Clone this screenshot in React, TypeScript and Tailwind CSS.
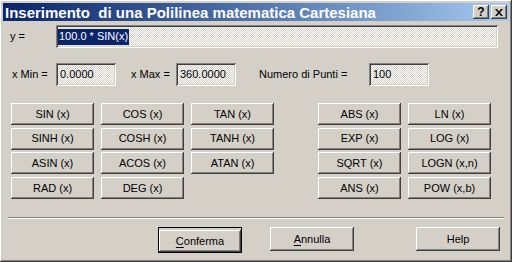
import React from "react";

const FONT = "font-['Liberation_Sans',Arial,sans-serif]";

const RAISED =
  "shadow-[inset_-1px_-1px_#404040,inset_1px_1px_#ffffff,inset_-2px_-2px_#808080,inset_2px_2px_#d4d0c8]";
const SUNKEN =
  "shadow-[inset_1px_1px_#808080,inset_-1px_-1px_#ffffff,inset_2px_2px_#404040,inset_-2px_-2px_#d4d0c8]";
const DITHER =
  "bg-[repeating-conic-gradient(#ffffff_0%_25%,#d4d0c8_0%_50%)] bg-[length:2px_2px]";

const LEFT_FUNCS = [
  ["SIN (x)", "COS (x)", "TAN (x)"],
  ["SINH (x)", "COSH (x)", "TANH (x)"],
  ["ASIN (x)", "ACOS (x)", "ATAN (x)"],
  ["RAD (x)", "DEG (x)", ""],
];

const RIGHT_FUNCS = [
  ["ABS (x)", "LN (x)"],
  ["EXP (x)", "LOG (x)"],
  ["SQRT (x)", "LOGN (x,n)"],
  ["ANS (x)", "POW (x,b)"],
];

const FuncButton: React.FC<{ label: string }> = ({ label }) =>
  label ? (
    <button
      className={`w-[83px] h-[22px] bg-[#d4d0c8] text-[11px] text-black ${RAISED}`}
    >
      {label}
    </button>
  ) : (
    <div className="w-[83px] h-[22px]" />
  );

const Field: React.FC<{ value: string; className?: string }> = ({
  value,
  className = "",
}) => (
  <div
    className={`h-[23px] flex items-center pl-[4px] text-[11px] text-black ${DITHER} ${SUNKEN} ${className}`}
  >
    {value}
  </div>
);

export default function App() {
  return (
    <div
      className={`w-[512px] h-[262px] p-[3px] bg-[#d4d0c8] flex flex-col ${FONT} ${RAISED}`}
    >
      {/* Title bar */}
      <div className="h-[18px] flex items-center bg-gradient-to-r from-[#0a246a] to-[#a6caf0] pl-[2px] pr-[2px]">
        <span className="text-white font-bold text-[15px] leading-none whitespace-pre">
          Inserimento  di una Polilinea matematica Cartesiana
        </span>
        <div className="ml-auto flex items-center gap-[2px]">
          <div
            className={`w-[16px] h-[14px] bg-[#d4d0c8] flex items-center justify-center text-[12px] font-bold leading-none ${RAISED}`}
          >
            ?
          </div>
          <div
            className={`w-[16px] h-[14px] bg-[#d4d0c8] flex items-center justify-center ${RAISED}`}
          >
            <svg width="8" height="7" viewBox="0 0 8 7">
              <path
                d="M0 0h2l2 2.5L6 0h2L5 3.5 8 7H6L4 4.5 2 7H0l3-3.5z"
                fill="#000"
              />
            </svg>
          </div>
        </div>
      </div>

      {/* Client area */}
      <div className="flex-1 flex flex-col">
        {/* y = */}
        <div className="mt-[4px] flex items-center h-[23px]">
          <span className="w-[53px] pl-[7px] text-[11px]">y =</span>
          <div
            className={`w-[442px] h-[23px] flex items-center pl-[2px] text-[11px] ${DITHER} ${SUNKEN}`}
          >
            <span className="bg-[#0a246a] text-white h-[16px] flex items-center px-[1px]">
              100.0 * SIN(x)
            </span>
          </div>
        </div>

        {/* Range */}
        <div className="mt-[15px] flex items-center h-[23px] text-[11px]">
          <span className="w-[53px] pl-[9px]">x Min =</span>
          <Field value="0.0000" className="w-[60px]" />
          <span className="w-[60px] pl-[15px]">x Max =</span>
          <Field value="360.0000" className="w-[60px]" />
          <span className="w-[133px] pl-[23px]">Numero di Punti =</span>
          <Field value="100" className="w-[60px]" />
        </div>

        {/* Function buttons */}
        <div className="mt-[17px] flex pl-[8px]">
          <div className="flex flex-col gap-[2.7px]">
            {LEFT_FUNCS.map((row, i) => (
              <div key={i} className="flex gap-[7px]">
                {row.map((f, j) => (
                  <FuncButton key={j} label={f} />
                ))}
              </div>
            ))}
          </div>
          <div className="ml-[44px] flex flex-col gap-[2.7px]">
            {RIGHT_FUNCS.map((row, i) => (
              <div key={i} className="flex gap-[7px]">
                {row.map((f, j) => (
                  <FuncButton key={j} label={f} />
                ))}
              </div>
            ))}
          </div>
        </div>

        {/* Separator */}
        <div className="mt-[18px] mx-[5px] h-[2px] border-t border-[#808080] border-b border-b-white" />

        {/* Bottom buttons */}
        <div className="mt-[8px] flex pl-[155px]">
          <div className="border border-black">
            <button
              className={`w-[82px] h-[22px] bg-[#d4d0c8] text-[11px] ${RAISED}`}
            >
              <span className="underline underline-offset-2">C</span>onferma
            </button>
          </div>
          <button
            className={`ml-[28px] w-[84px] h-[24px] bg-[#d4d0c8] text-[11px] ${RAISED}`}
          >
            <span className="underline underline-offset-2">A</span>nnulla
          </button>
          <button
            className={`ml-[62px] w-[84px] h-[24px] bg-[#d4d0c8] text-[11px] ${RAISED}`}
          >
            Help
          </button>
        </div>
      </div>
    </div>
  );
}
